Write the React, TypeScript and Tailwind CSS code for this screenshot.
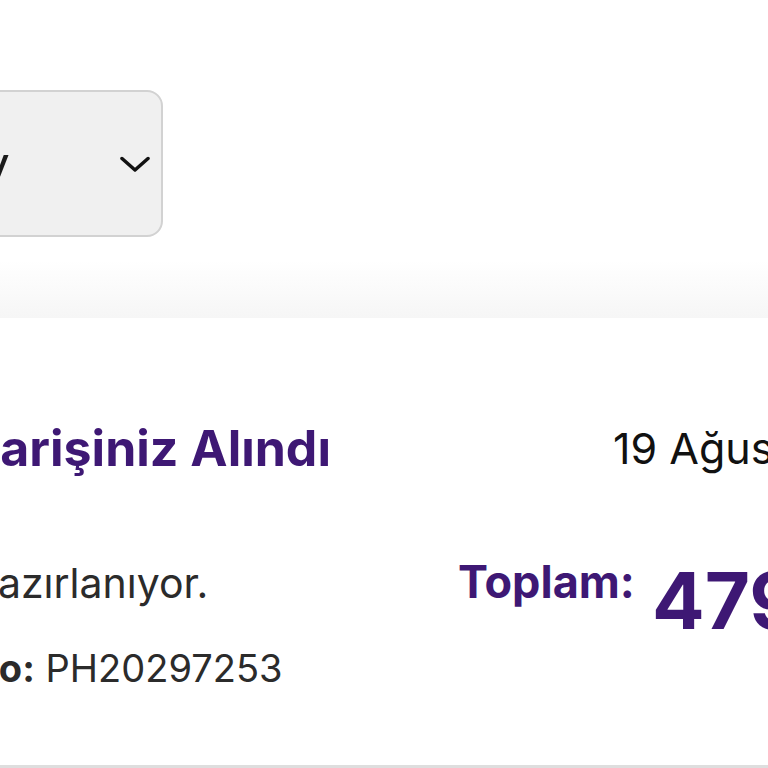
export default function App() {
  return (
    <div className="w-[768px] h-[768px] overflow-hidden bg-white font-['Inter',sans-serif]">
      {/* filtre alanı */}
      <div className="h-[260px] pt-[90px]">
        <div className="-ml-[208px] w-[371px] h-[147px] rounded-[16px] border-2 border-[#d2d2d2] bg-[#f0f0f0] flex items-center pl-[6px] pr-[11px]">
          <span className="text-[50px] leading-[58px] text-[#1a1a1a] whitespace-nowrap">Son 3 Ay</span>
          <svg className="ml-auto" width="30" height="16" viewBox="0 0 30 16" fill="none">
            <path d="M2 2.5 L15 14 L28 2.5" stroke="#111" strokeWidth="3.5" strokeLinecap="round" strokeLinejoin="round" />
          </svg>
        </div>
      </div>
      <div className="h-[58px] bg-linear-to-b from-white to-[#f6f6f6]" />

      {/* sipariş kartı */}
      <div className="h-[450px] bg-white border-b-[3px] border-[#dedede]">
        <div className="pt-[100px] -ml-[240px] flex">
          <div className="w-[698px] shrink-0 flex flex-col">
            <h2 className="ml-[162px] text-[50px] leading-[60px] font-bold text-[#3e1874] whitespace-nowrap">Siparişiniz Alındı</h2>
            <p className="mt-[81px] ml-[3px] text-[41px] leading-[48px] text-[#2b2b2b] whitespace-nowrap">Siparişiniz hazırlanıyor.</p>
            <p className="mt-[37px] ml-[72px] text-[38px] leading-[48px] text-[#2b2b2b] whitespace-nowrap">
              <span className="font-bold">Sipariş No:</span> PH20297253
            </p>
          </div>
          <div className="flex flex-col shrink-0">
            <span className="ml-[155px] text-[43px] leading-[60px] text-[#111] whitespace-nowrap">19 Ağustos 2024</span>
            <div className="mt-[78px] flex items-start gap-[17px]">
              <span className="text-[45px] leading-[52px] font-bold text-[#3e1874]">Toplam:</span>
              <span className="text-[78px] leading-[90px] font-bold text-[#3e1874] whitespace-nowrap">479,90 TL</span>
            </div>
          </div>
        </div>
      </div>
    </div>
  );
}
